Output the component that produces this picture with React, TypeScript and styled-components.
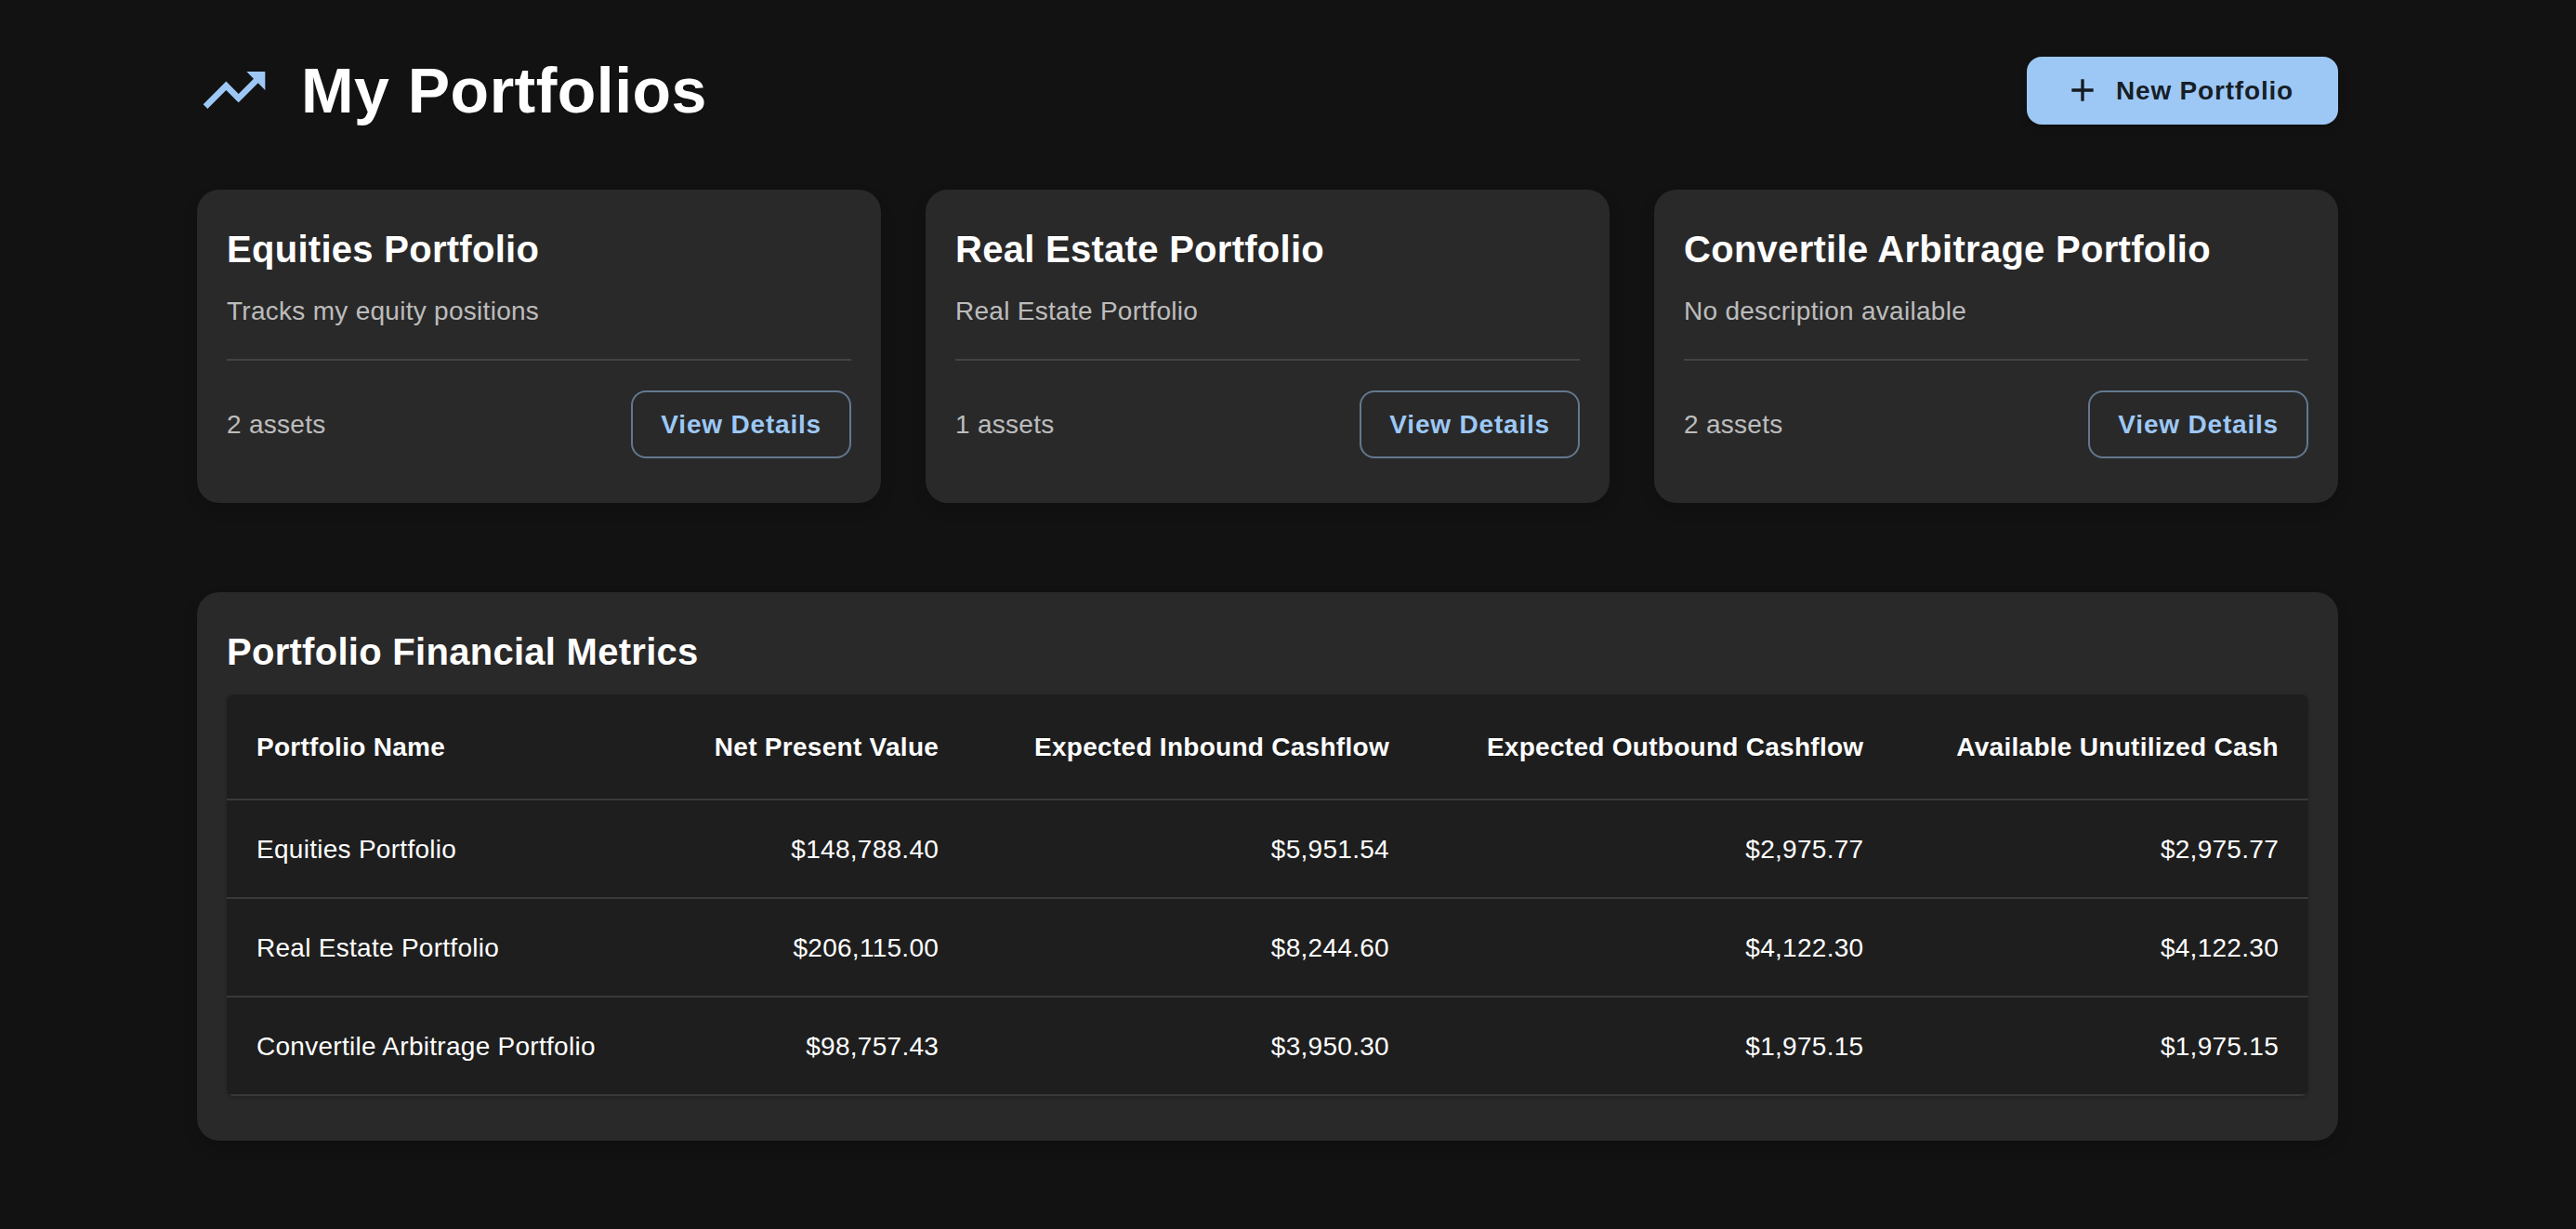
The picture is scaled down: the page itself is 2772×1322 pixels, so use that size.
import React from "react";
import styled, { createGlobalStyle } from "styled-components";

const colors = {
  page: "#121212",
  card: "#292929",
  paper: "#1e1e1e",
  primary: "#9dc8f5",
  primaryBorder: "rgba(157, 200, 245, 0.5)",
  text: "#ffffff",
  textMuted: "rgba(255, 255, 255, 0.7)",
  divider: "rgba(255, 255, 255, 0.12)",
  onPrimary: "rgba(0, 0, 0, 0.87)",
};

const GlobalStyle = createGlobalStyle`
  *, *::before, *::after {
    box-sizing: border-box;
  }

  body {
    margin: 0;
    background: ${colors.page};
    color: ${colors.text};
    font-family: Helvetica, "Liberation Sans", Arial, sans-serif;
    font-size: 28px;
    line-height: 40px;
    letter-spacing: 0.01em;
    -webkit-font-smoothing: antialiased;
  }
`;

const Page = styled.div`
  padding-right: 44px;
`;

const Container = styled.main`
  max-width: 2400px;
  margin: 0 auto;
  padding: 56px 48px;
`;

const Header = styled.header`
  display: flex;
  align-items: center;
  justify-content: space-between;
  margin-bottom: 66px;
`;

const TitleGroup = styled.div`
  display: flex;
  align-items: center;
  gap: 32px;
`;

const Icon = styled.svg<{ $size: number; $color: string }>`
  flex: none;
  display: block;
  width: ${(p) => p.$size}px;
  height: ${(p) => p.$size}px;
  fill: ${(p) => p.$color};
`;

const PageTitle = styled.h1`
  margin: 0;
  font-size: 68px;
  line-height: 82px;
  font-weight: 700;
  letter-spacing: 0.007em;
`;

const Button = styled.button`
  display: inline-flex;
  align-items: center;
  border-radius: 16px;
  font-family: inherit;
  font-size: 28px;
  line-height: 49px;
  font-weight: 700;
  letter-spacing: 0.029em;
  cursor: pointer;
`;

const PrimaryButton = styled(Button)`
  gap: 16px;
  padding: 12px 48px 12px 40px;
  border: 0;
  background: ${colors.primary};
  color: ${colors.onPrimary};
  box-shadow: 0 4px 8px rgba(0, 0, 0, 0.2);
`;

const OutlinedButton = styled(Button)`
  padding: 10px 30px;
  border: 2px solid ${colors.primaryBorder};
  background: transparent;
  color: ${colors.primary};
`;

const CardGrid = styled.section`
  display: grid;
  grid-template-columns: repeat(3, minmax(0, 1fr));
  gap: 48px;
  margin-bottom: 96px;
`;

const Card = styled.article`
  padding: 32px 32px 48px;
  border-radius: 24px;
  background: ${colors.card};
  box-shadow: 0 8px 16px rgba(0, 0, 0, 0.15);
`;

const CardTitle = styled.h2`
  margin: 0 0 14px;
  font-size: 40px;
  line-height: 64px;
  font-weight: 700;
  letter-spacing: 0.007em;
`;

const Description = styled.p`
  margin: 0;
  line-height: 42px;
  color: ${colors.textMuted};
`;

const Divider = styled.hr`
  height: 2px;
  margin: 30px 0 32px;
  border: 0;
  background: ${colors.divider};
`;

const CardFooter = styled.div`
  display: flex;
  align-items: center;
  justify-content: space-between;
`;

const TablePaper = styled.div`
  overflow: hidden;
  border-radius: 8px;
  background: ${colors.paper};
  box-shadow: 0 2px 4px rgba(0, 0, 0, 0.18);
`;

const Table = styled.table`
  width: 100%;
  border-collapse: collapse;
`;

const HeadCell = styled.th<{ $numeric?: boolean }>`
  padding: 33px 32px 31px;
  border-bottom: 2px solid ${colors.divider};
  line-height: 48px;
  font-weight: 700;
  text-align: ${(p) => (p.$numeric ? "right" : "left")};
`;

const Cell = styled.td<{ $numeric?: boolean }>`
  padding: 33px 32px 31px;
  border-bottom: 2px solid ${colors.divider};
  text-align: ${(p) => (p.$numeric ? "right" : "left")};
`;

const portfolios = [
  {
    name: "Equities Portfolio",
    description: "Tracks my equity positions",
    assets: 2,
    metrics: [148788.4, 5951.54, 2975.77, 2975.77],
  },
  {
    name: "Real Estate Portfolio",
    description: "Real Estate Portfolio",
    assets: 1,
    metrics: [206115, 8244.6, 4122.3, 4122.3],
  },
  {
    name: "Convertile Arbitrage Portfolio",
    description: "",
    assets: 2,
    metrics: [98757.43, 3950.3, 1975.15, 1975.15],
  },
];

const metricNames = [
  "Net Present Value",
  "Expected Inbound Cashflow",
  "Expected Outbound Cashflow",
  "Available Unutilized Cash",
];

const money = new Intl.NumberFormat("en-US", { style: "currency", currency: "USD" });

export default function App() {
  return (
    <Page>
      <GlobalStyle />
      <Container>
        <Header>
          <TitleGroup>
            <Icon $size={80} $color={colors.primary} viewBox="0 0 24 24" aria-hidden="true">
              <path d="m16 6 2.29 2.29-4.88 4.88-4-4L2 16.59 3.41 18l6-6 4 4 6.3-6.29L22 12V6z" />
            </Icon>
            <PageTitle>My Portfolios</PageTitle>
          </TitleGroup>
          <PrimaryButton type="button">
            <Icon $size={40} $color={colors.onPrimary} viewBox="0 0 24 24" aria-hidden="true">
              <path d="M19 13h-6v6h-2v-6H5v-2h6V5h2v6h6z" />
            </Icon>
            New Portfolio
          </PrimaryButton>
        </Header>

        <CardGrid>
          {portfolios.map((p) => (
            <Card key={p.name}>
              <CardTitle>{p.name}</CardTitle>
              <Description>{p.description || "No description available"}</Description>
              <Divider />
              <CardFooter>
                <Description>{`${p.assets} assets`}</Description>
                <OutlinedButton type="button">View Details</OutlinedButton>
              </CardFooter>
            </Card>
          ))}
        </CardGrid>

        <Card as="section">
          <CardTitle>Portfolio Financial Metrics</CardTitle>
          <TablePaper>
            <Table>
              <thead>
                <tr>
                  <HeadCell scope="col">Portfolio Name</HeadCell>
                  {metricNames.map((name) => (
                    <HeadCell key={name} scope="col" $numeric>
                      {name}
                    </HeadCell>
                  ))}
                </tr>
              </thead>
              <tbody>
                {portfolios.map((p) => (
                  <tr key={p.name}>
                    <Cell>{p.name}</Cell>
                    {p.metrics.map((value, i) => (
                      <Cell key={metricNames[i]} $numeric>
                        {money.format(value)}
                      </Cell>
                    ))}
                  </tr>
                ))}
              </tbody>
            </Table>
          </TablePaper>
        </Card>
      </Container>
    </Page>
  );
}
